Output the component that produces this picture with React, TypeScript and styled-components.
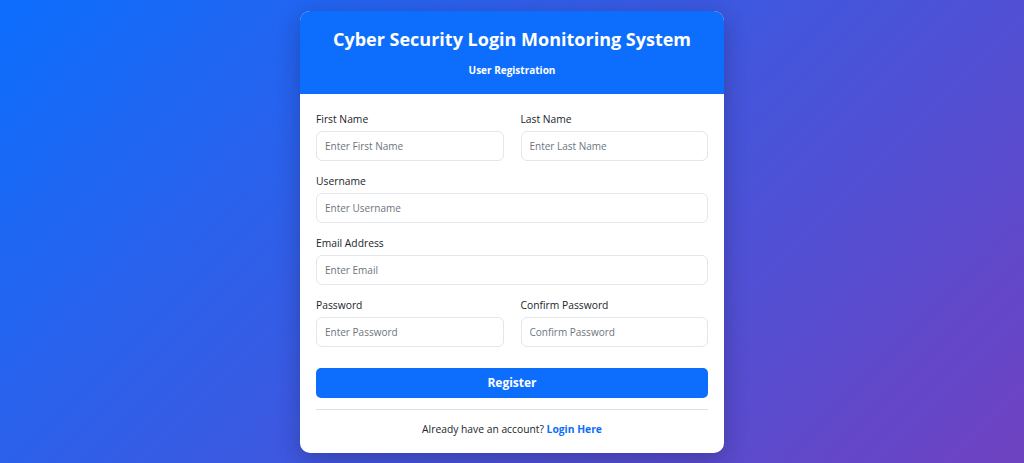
import React from "react";
import styled, { createGlobalStyle } from "styled-components";

const GlobalStyle = createGlobalStyle`
  * { box-sizing: border-box; }
  html, body { margin: 0; padding: 0; }
  body {
    font-family: "Open Sans", "Noto Sans", Arial, sans-serif;
    background: linear-gradient(135deg, #0d6efd 0%, #6f42c1 100%);
    min-height: 100vh;
  }
`;

const Page = styled.main`
  min-height: 100vh;
  display: flex;
  align-items: center;
  justify-content: center;
`;

const Card = styled.section`
  width: 424px;
  background: #ffffff;
  border-radius: 10px;
  overflow: hidden;
  box-shadow: 0 6px 22px rgba(20, 20, 60, 0.3);
`;

const Header = styled.header`
  background: #0d6efd;
  color: #ffffff;
  text-align: center;
  padding: 14px 16px 16px;
  display: flex;
  flex-direction: column;
  gap: 9px;
`;

const Title = styled.h1`
  margin: 0;
  font-size: 18px;
  line-height: 28px;
  font-weight: 700;
`;

const Subtitle = styled.h2`
  margin: 0;
  font-size: 10px;
  line-height: 16px;
  font-weight: 700;
`;

const Body = styled.form`
  padding: 17px 16px 16px;
  display: flex;
  flex-direction: column;
`;

const Row = styled.div<{ $cols: number }>`
  display: grid;
  grid-template-columns: repeat(${(p) => p.$cols}, 1fr);
  column-gap: 17px;
  margin-bottom: 12px;
`;

const Field = styled.div`
  display: flex;
  flex-direction: column;
  gap: 4px;
`;

const Label = styled.label`
  font-size: 10.3px;
  line-height: 16px;
  color: #212529;
`;

const Input = styled.input`
  height: 30px;
  width: 100%;
  border: 1px solid #e3e6ea;
  border-radius: 6px;
  padding: 0 8px;
  font-family: inherit;
  font-size: 10px;
  color: #212529;
  background: #fff;
  outline: none;
  &::placeholder { color: #6c757d; }
`;

const Button = styled.button`
  margin-top: 9px;
  height: 30px;
  width: 100%;
  border: none;
  border-radius: 5px;
  background: #0d6efd;
  color: #fff;
  font-family: inherit;
  font-size: 12px;
  font-weight: 700;
  cursor: pointer;
`;

const Divider = styled.hr`
  margin: 11px 0 11px;
  border: none;
  border-top: 1px solid #dcdfe3;
`;

const Footer = styled.p`
  margin: 0;
  text-align: center;
  font-size: 10.3px;
  line-height: 16px;
  color: #212529;
`;

const LoginLink = styled.a`
  color: #0d6efd;
  font-weight: 700;
  text-decoration: none;
`;

type F = { label: string; placeholder: string; type?: string };

const rows: F[][] = [
  [
    { label: "First Name", placeholder: "Enter First Name" },
    { label: "Last Name", placeholder: "Enter Last Name" },
  ],
  [{ label: "Username", placeholder: "Enter Username" }],
  [{ label: "Email Address", placeholder: "Enter Email", type: "email" }],
  [
    { label: "Password", placeholder: "Enter Password", type: "password" },
    { label: "Confirm Password", placeholder: "Confirm Password", type: "password" },
  ],
];

export default function App() {
  return (
    <>
      <GlobalStyle />
      <Page>
        <Card>
          <Header>
            <Title>Cyber Security Login Monitoring System</Title>
            <Subtitle>User Registration</Subtitle>
          </Header>
          <Body onSubmit={(e) => e.preventDefault()}>
            {rows.map((r, i) => (
              <Row key={i} $cols={r.length}>
                {r.map((f) => (
                  <Field key={f.label}>
                    <Label>{f.label}</Label>
                    <Input type={f.type || "text"} placeholder={f.placeholder} />
                  </Field>
                ))}
              </Row>
            ))}
            <Button type="submit">Register</Button>
            <Divider />
            <Footer>
              Already have an account? <LoginLink href="#">Login Here</LoginLink>
            </Footer>
          </Body>
        </Card>
      </Page>
    </>
  );
}
